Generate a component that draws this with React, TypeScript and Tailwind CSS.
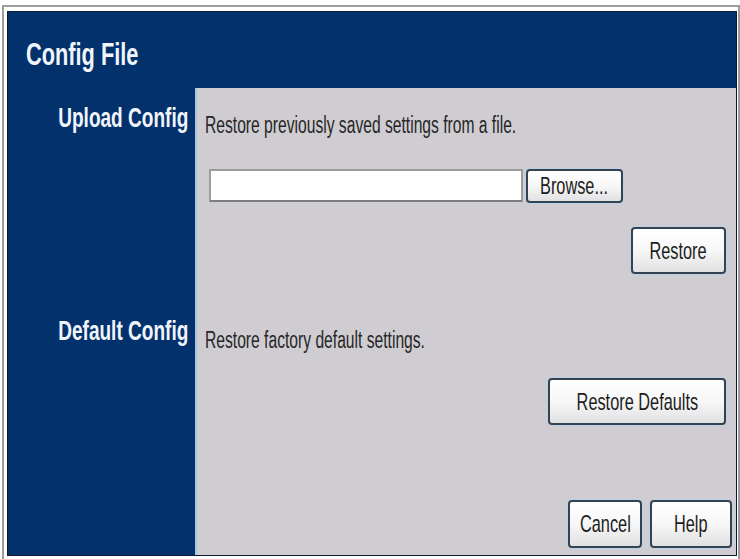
import React from "react";

type SquishProps = {
  children: React.ReactNode;
  className?: string;
  origin: "origin-left" | "origin-right" | "origin-center";
};

// Narrow, tall text in the style of the router admin pages
function Squish({ children, className = "", origin }: SquishProps) {
  return (
    <span
      className={`inline-block shrink-0 whitespace-nowrap leading-none scale-x-[0.68] ${origin} ${className}`}
    >
      {children}
    </span>
  );
}

function Button({
  label,
  className = "",
}: {
  label: string;
  className?: string;
}) {
  return (
    <button
      type="button"
      className={`flex items-center justify-center overflow-visible rounded-[4px] border-2 border-[#35424f] bg-linear-to-b from-white via-[#f7f7f7] to-[#e1e1e3] text-[24px] text-[#1d1d1d] shadow-[0_0_0_1px_#bcd0e6] ${className}`}
    >
      <Squish origin="origin-center">{label}</Squish>
    </button>
  );
}

export default function App() {
  return (
    <div
      className="h-[559px] w-[740px] overflow-hidden bg-white pl-[2px] pt-[5px]"
      style={{ fontFamily: '"Liberation Sans", Arial, sans-serif' }}
    >
      <div className="h-[560px] w-[738px] border-2 border-b-0 border-[#9d9d9d] pl-[3px] pr-[1px] pt-[4px]">
        <div className="flex h-[545px] flex-col border border-[#0c1b31] bg-[#03316b]">
          {/* Title bar */}
          <div className="h-[76px] shrink-0 pl-[18px] pt-[26px]">
            <Squish
              origin="origin-left"
              className="text-[32px] font-bold text-[#f1f5fb]"
            >
              Config File
            </Squish>
          </div>

          <div className="flex min-h-0 flex-1">
            {/* Section labels */}
            <div className="flex w-[187px] shrink-0 flex-col items-end pr-[7px]">
              <div className="mt-[16px] flex w-full justify-end">
                <Squish
                  origin="origin-right"
                  className="text-[28px] font-bold text-[#f1f5fb]"
                >
                  Upload Config
                </Squish>
              </div>
              <div className="mt-[185px] flex w-full justify-end">
                <Squish
                  origin="origin-right"
                  className="text-[28px] font-bold text-[#f1f5fb]"
                >
                  Default Config
                </Squish>
              </div>
            </div>

            {/* Settings panel */}
            <div className="flex flex-1 flex-col border-l-2 border-[#a9c4e3] bg-[#d0cdd2]">
              <div className="mt-[26px] pl-[8px]">
                <Squish origin="origin-left" className="text-[23px] text-[#262626]">
                  Restore previously saved settings from a file.
                </Squish>
              </div>

              <div className="mt-[29px] flex items-start gap-[3px] pl-[12px]">
                <input
                  type="text"
                  className="h-[33px] w-[314px] border-2 border-[#9c9c9c] border-b-[#7d7d7d] bg-white outline-none"
                />
                <Button label="Browse..." className="h-[34px] w-[97px] rounded-[3px]" />
              </div>

              <div className="mt-[24px] flex justify-end pr-[10px]">
                <Button label="Restore" className="h-[47px] w-[95px]" />
              </div>

              <div className="mt-[55px] pl-[8px]">
                <Squish origin="origin-left" className="text-[23px] text-[#262626]">
                  Restore factory default settings.
                </Squish>
              </div>

              <div className="mt-[23px] flex justify-end pr-[10px]">
                <Button label="Restore Defaults" className="h-[47px] w-[178px]" />
              </div>

              <div className="mt-[75px] flex justify-end gap-[8px] pr-[4px]">
                <Button label="Cancel" className="h-[48px] w-[74px]" />
                <Button label="Help" className="h-[48px] w-[82px]" />
              </div>
            </div>
          </div>
        </div>
      </div>
    </div>
  );
}
